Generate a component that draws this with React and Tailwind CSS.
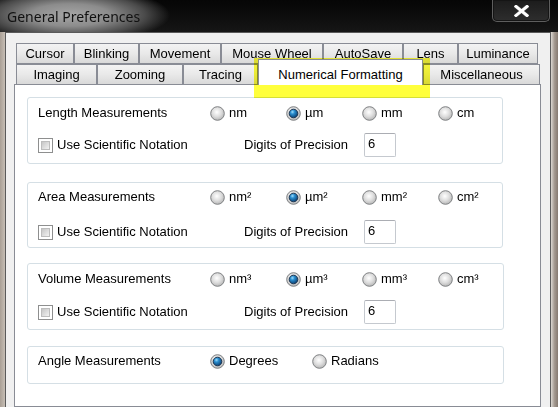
import React, { useId } from "react";

const row1 = [
  ["Cursor", "w-[58px]"],
  ["Blinking", "w-[65px]"],
  ["Movement", "w-[82px]"],
  ["Mouse Wheel", "w-[102px]"],
  ["AutoSave", "w-[80px]"],
  ["Lens", "w-[55px]"],
  ["Luminance", "w-[80px]"],
];

const row2 = [
  ["Imaging", "w-[81px]"],
  ["Zooming", "w-[86px]"],
  ["Tracing", "w-[75px]"],
  ["Numerical Formatting", "w-[165px]", true],
  ["Miscellaneous", "w-[117px]"],
];

const Radio = ({ label, checked }) => {
  const id = useId().replace(/[^a-zA-Z0-9]/g, "");
  return (
    <div className="flex items-center gap-[4px]">
      <svg width="15" height="15" viewBox="0 0 15 15" className="shrink-0">
        <defs>
          <radialGradient id={`bg${id}`} cx="45%" cy="40%" r="60%">
            <stop offset="0%" stopColor="#ffffff" />
            <stop offset="55%" stopColor="#dedede" />
            <stop offset="100%" stopColor="#b8b8b8" />
          </radialGradient>
          <radialGradient id={`dot${id}`} cx="38%" cy="32%" r="70%">
            <stop offset="0%" stopColor="#9fdcfb" />
            <stop offset="35%" stopColor="#2a8fd0" />
            <stop offset="100%" stopColor="#0b3f72" />
          </radialGradient>
        </defs>
        <circle cx="7.5" cy="7.5" r="6.8" fill={`url(#bg${id})`} stroke="#7f8183" strokeWidth="1" />
        {checked && (
          <circle cx="7.5" cy="7.5" r="4.3" fill={`url(#dot${id})`} stroke="#1d3550" strokeWidth="1" />
        )}
      </svg>
      <span>{label}</span>
    </div>
  );
};

const Checkbox = () => (
  <div className="h-[15px] w-[15px] shrink-0 border border-[#8e8f8f] bg-white p-[2px]">
    <div className="h-full w-full border border-[#bdbdbd] bg-linear-to-br from-[#c6c6c6] to-[#f2f2f2]" />
  </div>
);

const UnitRow = ({ title, units, selected }) => (
  <div className="flex h-[20px] items-center">
    <div className="w-[172px] shrink-0">{title}</div>
    {units.map((u) => (
      <div key={u} className="w-[76px] shrink-0">
        <Radio label={u} checked={u === selected} />
      </div>
    ))}
  </div>
);

const PrecisionRow = () => (
  <div className="flex h-[26px] items-center">
    <div className="flex w-[206px] shrink-0 items-center gap-[4px]">
      <Checkbox />
      <span>Use Scientific Notation</span>
    </div>
    <span className="w-[120px] shrink-0">Digits of Precision</span>
    <div className="h-[24px] w-[32px] rounded-[2px] border border-[#c5c9cf] border-t-[#abadb3] bg-white pl-[3px] leading-[19px]">
      6
    </div>
  </div>
);

const Tab = ({ label, width, active }) =>
  active ? (
    <div
      className={`${width} relative z-10 -mb-px flex h-[26px] shrink-0 items-start justify-center border border-b-0 border-[#898c95] bg-white pt-[5px]`}
    >
      {label}
    </div>
  ) : (
    <div
      className={`${width} flex h-[21px] shrink-0 items-center justify-center border border-[#898c95] bg-linear-to-b from-[#f3f3f3] via-[#e9e9e9] to-[#d9d9d9]`}
    >
      {label}
    </div>
  );

export default function App() {
  return (
    <div className="relative flex h-[407px] w-[558px] flex-col overflow-hidden bg-[#0c0c0c] font-['Liberation_Sans',Arial,sans-serif] text-[13px] text-black">
      {/* Title bar */}
      <div className="flex h-[32px] shrink-0 items-start bg-linear-to-b from-[#060606] to-[#161616]">
        <div className="flex h-[32px] w-[170px] items-center bg-[radial-gradient(ellipse_100px_28px_at_70px_15px,#a6a6a6_0%,#8c8c8c_40%,#4a4a4a_75%,rgba(20,20,20,0)_100%)] pl-[7px] font-['Noto_Sans',sans-serif] text-[14px] text-[#111]">
          General Preferences
        </div>
        <div className="ml-auto mr-[8px] flex h-[22px] w-[58px] items-center justify-center rounded-b-[5px] border border-t-0 border-[#5e5e5e] bg-linear-to-b from-[#1c1c1c] to-[#2e2e2e] shadow-[inset_0_0_0_1px_#151515]">
          <svg width="15" height="12" viewBox="0 0 15 12">
            <path d="M2 1.5 L13 10.5 M13 1.5 L2 10.5" stroke="#3a3a3a" strokeWidth="4.4" strokeLinecap="square" />
            <path d="M2 1.5 L13 10.5 M13 1.5 L2 10.5" stroke="#ffffff" strokeWidth="3" strokeLinecap="square" />
          </svg>
        </div>
      </div>

      {/* Window body */}
      <div className="flex min-h-0 flex-1">
        <div className="w-[5px] shrink-0 bg-linear-to-r from-[#a99f95] to-[#c6beb5]" />
        <div className="flex w-[546px] shrink-0 flex-col border-x border-t border-[#5a5a5a] bg-[#f0f0f0] pl-[8px] pt-[10px]">
          {/* Tabs */}
          <div className="flex flex-col pl-[2px]">
            <div className="flex">
              {row1.map(([label, width]) => (
                <Tab key={label} label={label} width={width} />
              ))}
            </div>
            <div className="flex h-[20px] items-end">
              {row2.map(([label, width, active]) =>
                active ? (
                  <Tab key={label} label={label} width={width} active />
                ) : (
                  <div
                    key={label}
                    className={`${width} flex h-[20px] shrink-0 items-center justify-center border border-b-0 border-[#898c95] bg-linear-to-b from-[#f3f3f3] via-[#e9e9e9] to-[#d9d9d9]`}
                  >
                    {label}
                  </div>
                )
              )}
            </div>
          </div>

          {/* Panel */}
          <div className="flex w-[527px] flex-1 flex-col border border-[#898c95] bg-white pl-[12px] pt-[12px]">
            <div className="w-[476px] rounded-[3px] border border-[#d5dfe5] pl-[10px] pt-[5px] pb-[5px]">
              <UnitRow title="Length Measurements" units={["nm", "µm", "mm", "cm"]} selected="µm" />
              <div className="mt-[9px]">
                <PrecisionRow />
              </div>
            </div>

            <div className="mt-[18px] w-[476px] rounded-[3px] border border-[#d5dfe5] pl-[10px] pt-[4px] pb-[2px]">
              <UnitRow title="Area Measurements" units={["nm²", "µm²", "mm²", "cm²"]} selected="µm²" />
              <div className="mt-[12px]">
                <PrecisionRow />
              </div>
            </div>

            <div className="mt-[15px] w-[477px] rounded-[3px] border border-[#d5dfe5] pl-[10px] pt-[5px] pb-[4px]">
              <UnitRow title="Volume Measurements" units={["nm³", "µm³", "mm³", "cm³"]} selected="µm³" />
              <div className="mt-[10px]">
                <PrecisionRow />
              </div>
            </div>

            <div className="mt-[16px] w-[477px] rounded-[3px] border border-[#d5dfe5] pl-[10px] pt-[4px] pb-[12px]">
              <div className="flex h-[20px] items-center">
                <div className="w-[172px] shrink-0">Angle Measurements</div>
                <div className="w-[102px] shrink-0">
                  <Radio label="Degrees" checked />
                </div>
                <Radio label="Radians" />
              </div>
            </div>
          </div>
        </div>
        <div className="w-[7px] shrink-0 bg-linear-to-r from-[#dcd8d2] via-[#a39990] to-[#857a71]" />
      </div>

      {/* highlighter mark over the active tab */}
      <div className="pointer-events-none absolute left-[254px] top-[58px] h-[40px] w-[176px] bg-[#ffff3c] mix-blend-multiply" />
    </div>
  );
}
